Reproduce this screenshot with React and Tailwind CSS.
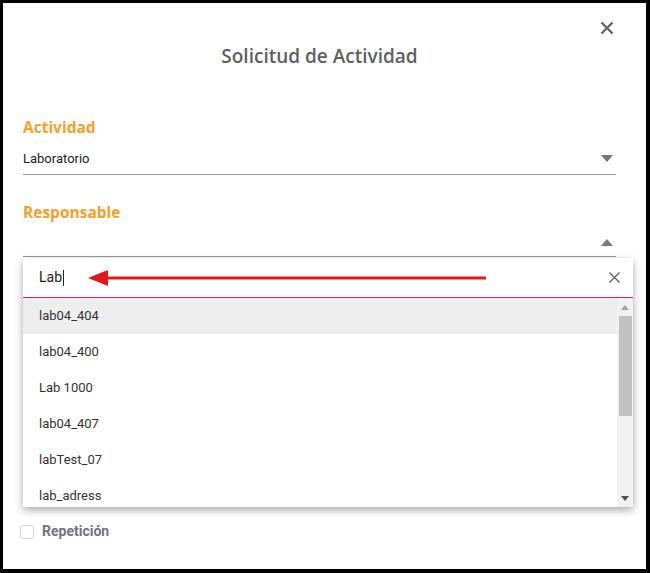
import React from "react";

const ITEMS = ["lab04_404", "lab04_400", "Lab 1000", "lab04_407", "labTest_07", "lab_adress"];

function CloseIcon({ size = 14, stroke = 2.4, color = "#666" }) {
  return (
    <svg width={size} height={size} viewBox="0 0 14 14">
      <path d="M1.5 1.5 L12.5 12.5 M12.5 1.5 L1.5 12.5" stroke={color} strokeWidth={stroke} strokeLinecap="butt" />
    </svg>
  );
}

function Caret({ up = false, color = "#777" }) {
  return (
    <svg width="12" height="7" viewBox="0 0 12 7">
      <path d={up ? "M0 7 L6 0 L12 7 Z" : "M0 0 L12 0 L6 7 Z"} fill={color} />
    </svg>
  );
}

function RedArrow() {
  return (
    <svg width="398" height="18" viewBox="0 0 398 18" className="shrink-0">
      <path d="M0 9 L20 1 L20 17 Z" fill="#e3161b" />
      <rect x="18" y="7.5" width="380" height="3" fill="#e3161b" />
    </svg>
  );
}

export default function App() {
  return (
    <div className="w-[650px] h-[573px] bg-black pt-[3px] pl-[3px] pr-[4px] pb-[4px]">
      <div className="relative w-full h-full bg-white flex flex-col" style={{ fontFamily: "Roboto, 'Liberation Sans', sans-serif" }}>
        <button className="absolute top-[18px] right-[32px] w-[14px] h-[14px] flex items-center justify-center">
          <CloseIcon />
        </button>

        <h2
          className="pt-[39px] pr-[10px] h-[67px] leading-[28px] text-center text-[19px] font-semibold text-[#5f5f5f]"
          style={{ fontFamily: "'Open Sans', 'Liberation Sans', sans-serif" }}
        >
          Solicitud de Actividad
        </h2>

        <div className="pl-[20px] pr-[30px]">
          <label
            className="block mt-[46px] h-[22px] leading-[22px] text-[15.5px] font-bold text-[#f6a027]"
            style={{ fontFamily: "'Open Sans', 'Liberation Sans', sans-serif" }}
          >
            Actividad
          </label>
          <div className="h-[37px] pt-[5px] flex items-center justify-between border-b border-[#9a9a9a]">
            <span className="text-[13px] text-[#212121]">Laboratorio</span>
            <span className="mr-[3px] flex"><Caret /></span>
          </div>

          <label
            className="block mt-[26px] h-[22px] leading-[22px] text-[15.5px] font-bold text-[#f6a027]"
            style={{ fontFamily: "'Open Sans', 'Liberation Sans', sans-serif" }}
          >
            Responsable
          </label>
          <div className="relative">
            <div className="h-[34px] pt-[6px] flex items-center justify-end border-b border-[#9a9a9a]">
              <span className="mr-[3px] flex"><Caret up /></span>
            </div>

            <div className="absolute left-0 top-full mt-[1px] w-[610px] bg-white z-10 shadow-[0_3px_8px_rgba(0,0,0,0.35)]">
              <div className="h-[40px] flex items-center pl-[16px] pr-[12px] border-b border-[#d6224f]">
                <span className="text-[14px] text-[#222]">Lab</span>
                <span className="w-[1px] h-[16px] bg-[#222] ml-[1px]" />
                <span className="ml-[24px] flex"><RedArrow /></span>
                <span className="ml-auto flex"><CloseIcon size={13} stroke={1.5} color="#666" /></span>
              </div>
              <div className="h-[209px] flex overflow-hidden">
                <ul className="flex-1">
                  {ITEMS.map((it, i) => (
                    <li
                      key={it}
                      className={`h-[36px] flex items-center pl-[16px] text-[13px] text-[#333] ${i === 0 ? "bg-[#eeeeee]" : ""}`}
                    >
                      {it}
                    </li>
                  ))}
                </ul>
                <div className="w-[16px] bg-[#f1f1f1] flex flex-col items-center">
                  <div className="h-[18px] flex items-center justify-center">
                    <svg width="8" height="5" viewBox="0 0 8 5"><path d="M0 5 L4 0 L8 5 Z" fill="#a3a3a3" /></svg>
                  </div>
                  <div className="w-[13px] h-[100px] bg-[#c1c1c1]" />
                  <div className="mt-auto h-[18px] flex items-center justify-center">
                    <svg width="8" height="5" viewBox="0 0 8 5"><path d="M0 0 L8 0 L4 5 Z" fill="#505050" /></svg>
                  </div>
                </div>
              </div>
            </div>
          </div>
        </div>

        <div className="mt-[264px] pl-[17px] flex items-center gap-[8px]">
          <span className="w-[14px] h-[14px] rounded-[3px] border border-[#d9d9d9] bg-white" />
          <span className="text-[14px] font-bold text-[#6f7480]">Repetición</span>
        </div>
      </div>
    </div>
  );
}
